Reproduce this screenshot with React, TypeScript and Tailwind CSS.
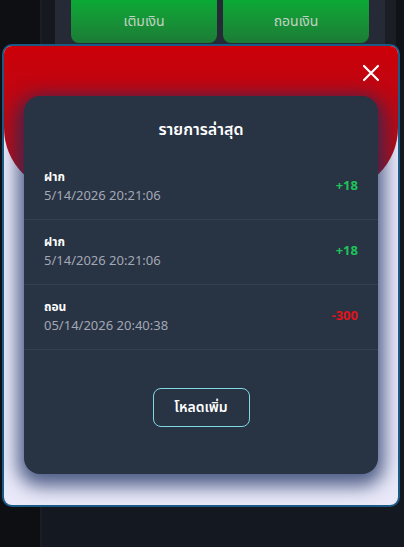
import React from "react";

const rows = [
  { label: "ฝาก", date: "5/14/2026 20:21:06", amount: "+18", pos: true },
  { label: "ฝาก", date: "5/14/2026 20:21:06", amount: "+18", pos: true },
  { label: "ถอน", date: "05/14/2026 20:40:38", amount: "-300", pos: false },
];

export default function App() {
  return (
    <div
      className="relative w-[404px] h-[547px] overflow-hidden bg-[#13161c]"
      style={{ fontFamily: '"Noto Sans Thai", "Noto Sans", "Liberation Sans", sans-serif' }}
    >
      {/* page behind */}
      <div className="flex h-full">
        <div className="w-[42px] h-full bg-[#0d0f13] border-r-2 border-[#1a1d24]" />
        <div className="flex-1 flex flex-col bg-[#141820]">
          <div className="flex h-[80px]">
            <div className="w-[13px] bg-[#15181f]" />
            <div className="w-[330px] bg-[#262a36] px-4">
              <div className="grid grid-cols-2 gap-1.5">
                <div className="h-[43px] rounded-b-lg bg-gradient-to-b from-[#0aa935] to-[#1b7c36] flex items-center justify-center text-[14px] text-[#c2d2c4]">
                  เติมเงิน
                </div>
                <div className="h-[43px] rounded-b-lg bg-gradient-to-b from-[#0aa935] to-[#1b7c36] flex items-center justify-center text-[14px] text-[#c2d2c4]">
                  ถอนเงิน
                </div>
              </div>
            </div>
            <div className="w-[11px] bg-[#1b1e25]" />
            <div className="flex-1 bg-[#101318]" />
          </div>
        </div>
      </div>

      {/* modal */}
      <div className="absolute left-[2px] top-[44px] w-[398px] h-[463px] rounded-[10px] border-2 border-[#1a5a85] bg-[#e9e9f9] overflow-hidden">
        <div className="absolute inset-x-0 top-0 h-[146px] rounded-b-[64px] bg-gradient-to-b from-[#cc0008] to-[#a50f1c]" />
        <button className="absolute right-[18px] top-[18px] text-white">
          <svg width="18" height="18" viewBox="0 0 18 18" fill="none" stroke="white" strokeWidth="2.2" strokeLinecap="round">
            <path d="M2 2L16 16M16 2L2 16" />
          </svg>
        </button>
        <div className="relative mt-[50px] mx-[20px] h-[378px] rounded-[16px] bg-[#283344] shadow-[0_6px_18px_6px_rgba(25,45,95,0.75)] flex flex-col">
          <div className="pt-[21px] text-center text-white text-[16px] font-semibold leading-[26px]">
            รายการล่าสุด
          </div>
          <div className="mt-[12px] flex flex-col">
            {rows.map((r, i) => (
              <div key={i} className="flex items-center justify-between px-5 h-[65px] border-b border-[#35404f]">
                <div className="flex flex-col">
                  <span className="text-[12px] font-bold text-white leading-[18px]">{r.label}</span>
                  <span className="text-[13px] text-[#a3a8b4] leading-[20px]">{r.date}</span>
                </div>
                <span className={"text-[13px] font-bold " + (r.pos ? "text-[#1fc15a]" : "text-[#e0141a]")}>
                  {r.amount}
                </span>
              </div>
            ))}
          </div>
          <div className="mt-[38px] flex justify-center">
            <button className="w-[97px] h-[39px] rounded-lg border border-[#80d8e2] text-white text-[14px] font-semibold">
              โหลดเพิ่ม
            </button>
          </div>
        </div>
      </div>
    </div>
  );
}
